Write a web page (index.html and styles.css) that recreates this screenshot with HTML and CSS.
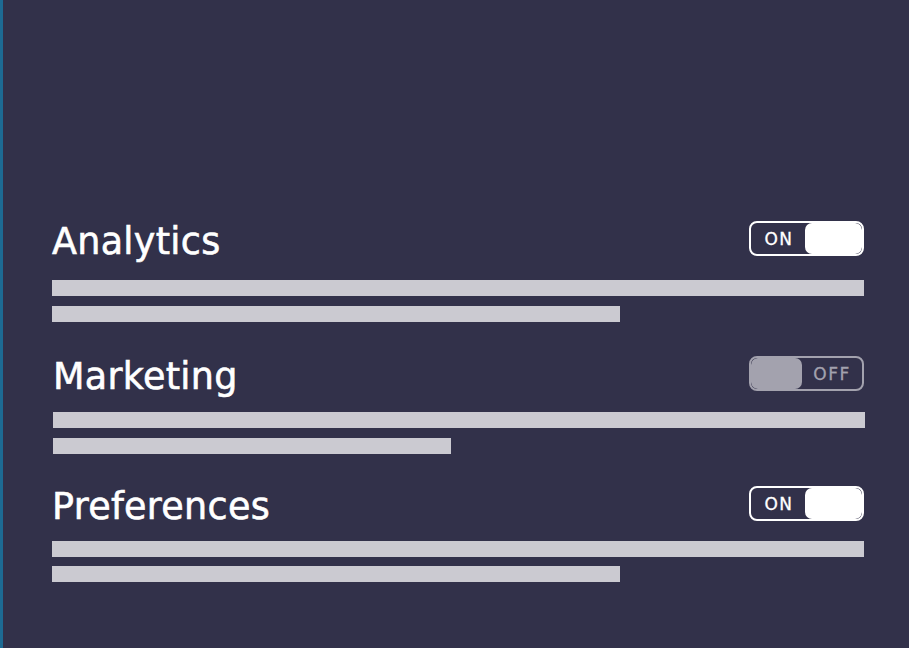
FILE: index.html
```html
<!DOCTYPE html>
<html>
<head>
<meta charset="utf-8">
<link rel="stylesheet" href="styles.css">
</head>
<body>
<div class="page">
  <div class="section s1">
    <div class="row">
      <h2 class="title">Analytics</h2>
      <div class="toggle on"><span class="label">ON</span><span class="knob"></span></div>
    </div>
    <div class="bar full"></div>
    <div class="bar" style="width:568px"></div>
  </div>
  <div class="section s2">
    <div class="row">
      <h2 class="title">Marketing</h2>
      <div class="toggle off"><span class="knob"></span><span class="label">OFF</span></div>
    </div>
    <div class="bar full"></div>
    <div class="bar" style="width:398px"></div>
  </div>
  <div class="section s3">
    <div class="row">
      <h2 class="title">Preferences</h2>
      <div class="toggle on"><span class="label">ON</span><span class="knob"></span></div>
    </div>
    <div class="bar full"></div>
    <div class="bar" style="width:568px"></div>
  </div>
</div>
</body>
</html>
```
FILE: styles.css
```css
html, body {
  margin: 0;
  padding: 0;
  height: 100%;
}
body {
  background: #32314a;
  border-left: 3px solid #1d6a93;
  box-sizing: border-box;
  font-family: "DejaVu Sans", sans-serif;
  overflow: hidden;
}
.page {
  padding: 221px 0 0 49px;
  width: 812px;
  display: flex;
  flex-direction: column;
}
.section {
  display: flex;
  flex-direction: column;
}
.row {
  display: flex;
  justify-content: space-between;
  align-items: center;
  height: 35px;
  margin-bottom: 24px;
}
.s2 {
  margin-top: 34px;
  margin-left: 1px;
}
.s2 .row {
  margin-bottom: 21px;
}
.s3 {
  margin-top: 32px;
}
.s3 .row {
  margin-bottom: 20px;
}
.s3 .bar.full {
  margin-bottom: 9px;
}
.title {
  margin: 0;
  font-weight: normal;
  font-size: 36.5px;
  color: #ffffff;
  -webkit-text-stroke: 0.6px #ffffff;
  letter-spacing: 0.3px;
  line-height: 35px;
  position: relative;
  top: 3px;
}
.toggle {
  box-sizing: border-box;
  width: 115px;
  height: 35px;
  border-radius: 8px;
  display: flex;
  align-items: stretch;
  overflow: hidden;
}
.toggle.on {
  border: 2px solid #ffffff;
}
.toggle.off {
  border: 2px solid #a3a2ae;
}
.label {
  flex: 1;
  display: flex;
  align-items: center;
  justify-content: center;
  font-size: 17px;
  letter-spacing: 1.5px;
  -webkit-text-stroke: 0.3px currentColor;
}
.toggle.on .label {
  color: #ffffff;
  padding-left: 2px;
}
.toggle.off .label {
  color: #a3a2ae;
}
.knob {
  width: 57px;
  border-radius: 7px;
}
.toggle.on .knob {
  background: #ffffff;
}
.toggle.off .knob {
  width: 51px;
  background: #a3a2ae;
}
.bar {
  height: 16px;
  background: #cbcad1;
}
.bar.full {
  width: 812px;
  margin-bottom: 10px;
}
```
